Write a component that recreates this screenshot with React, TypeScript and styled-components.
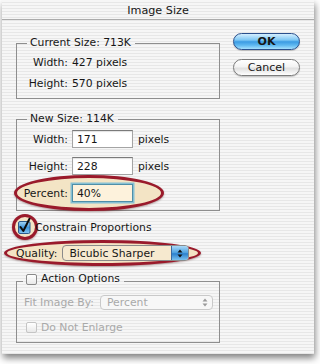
import React from "react";
import styled, { createGlobalStyle } from "styled-components";

const Global = createGlobalStyle`
  html, body { margin: 0; padding: 0; background: #ffffff; }
  body {
    width: 320px; height: 364px; overflow: hidden;
    font-family: "DejaVu Sans", "Liberation Sans", sans-serif;
    font-size: 10.8px; color: #161616;
  }
`;

const pinstripe = `repeating-linear-gradient(to bottom, #f6f6f6 0px, #f6f6f6 2px, #e7e7e7 2px, #e7e7e7 3px)`;

const Window = styled.div`
  margin-left: 2px;
  width: 312px;
  background: ${pinstripe};
  box-shadow: 1px 4px 7px rgba(0, 0, 0, 0.5);
  display: flex;
  flex-direction: column;
`;

const TitleBar = styled.div`
  height: 19px;
  line-height: 22px;
  text-align: center;
  font-size: 11.2px;
  border-bottom: 1px solid #ababab;
`;

const Body = styled.div`
  display: grid;
  grid-template-columns: 204px 67px;
  column-gap: 13px;
  padding: 13px 0 11px 14px;
  align-items: start;
`;

const LeftCol = styled.div`
  display: flex;
  flex-direction: column;
  padding-top: 3px;
`;

const RightCol = styled.div`
  display: flex;
  flex-direction: column;
  gap: 9px;
`;

const Group = styled.fieldset<{ $mt?: number; $pt: number; $pb: number; $gap: number }>`
  margin: ${p => p.$mt ?? 0}px 0 0 0;
  padding: ${p => p.$pt}px 6px ${p => p.$pb}px 0;
  border: 1px solid #8e8e8e;
  min-width: 0;
  display: flex;
  flex-direction: column;
  gap: ${p => p.$gap}px;
`;

const Legend = styled.legend<{ $ml: number; $pb?: number }>`
  margin-left: ${p => p.$ml}px;
  padding: 0 4px ${p => p.$pb ?? 0}px 3px;
  line-height: 14px;
  display: flex;
  align-items: center;
  gap: 4px;
`;

const Row = styled.div<{ $h: number; $mt?: number; $pl?: number }>`
  position: relative;
  isolation: isolate;
  display: flex;
  align-items: center;
  height: ${p => p.$h}px;
  margin-top: ${p => p.$mt ?? 0}px;
  padding-left: ${p => p.$pl ?? 0}px;
  white-space: nowrap;
`;

const Label = styled.span<{ $w?: number; $dim?: boolean }>`
  flex: none;
  width: ${p => (p.$w ? `${p.$w}px` : "auto")};
  text-align: right;
  color: ${p => (p.$dim ? "#a9a9a9" : "inherit")};
`;

const Value = styled.span`
  margin-left: 4px;
`;

const Unit = styled.span`
  margin-left: 5px;
`;

const Input = styled.div<{ $focus?: boolean }>`
  margin-left: 4px;
  width: 61px;
  height: 18px;
  box-sizing: border-box;
  padding-left: 4px;
  line-height: 17px;
  background: ${p => (p.$focus ? "#fdf2dc" : "#ffffff")};
  border: 1px solid ${p => (p.$focus ? "#4f8fa8" : "#a4a4a4")};
  border-top-color: ${p => (p.$focus ? "#4f8fa8" : "#7a7a7a")};
  box-shadow: ${p => (p.$focus ? "0 0 0 1.5px #86c0d4" : "inset 0 1px 1px rgba(0,0,0,0.12)")};
`;

const Ring = styled.span<{ $l: number; $t: number; $w: number; $h: number }>`
  position: absolute;
  z-index: -1;
  left: ${p => p.$l}px;
  top: ${p => p.$t}px;
  width: ${p => p.$w}px;
  height: ${p => p.$h}px;
  box-sizing: border-box;
  border: 3px solid #9a1a2b;
  border-radius: 50%;
  background: #f3e4c5;
  box-shadow: 0 1px 2px rgba(60, 0, 0, 0.35);
`;

const Button = styled.div<{ $primary?: boolean }>`
  height: 17px;
  box-sizing: border-box;
  border-radius: 9px;
  text-align: center;
  line-height: 15px;
  font-size: 11px;
  font-weight: ${p => (p.$primary ? 600 : 400)};
  border: 1px solid ${p => (p.$primary ? "#2a4f8c" : "#7b7b7b")};
  background: ${p =>
    p.$primary
      ? "linear-gradient(to bottom, #d4efff 0%, #7fc8f4 40%, #3b9be3 52%, #5fb8f0 75%, #a6e0fd 100%)"
      : "linear-gradient(to bottom, #ffffff 0%, #f3f3f3 45%, #e0e0e0 55%, #f4f4f4 85%, #ffffff 100%)"};
  box-shadow: 0 1px 1px rgba(0, 0, 0, 0.2);
`;

const Box = styled.span<{ $dim?: boolean }>`
  flex: none;
  width: 11px;
  height: 11px;
  box-sizing: border-box;
  border: 1px solid ${p => (p.$dim ? "#c4c4c4" : "#8a8a8a")};
  border-radius: 2px;
  background: linear-gradient(to bottom, #ffffff, #e9e9e9);
`;

const CheckText = styled.span<{ $dim?: boolean }>`
  margin-left: 4px;
  color: ${p => (p.$dim ? "#a9a9a9" : "inherit")};
`;

const CheckedIcon = styled.svg`
  flex: none;
  margin-left: 1px;
  margin-top: -3px;
`;

const Popup = styled.div<{ $w: number; $dim?: boolean }>`
  flex: none;
  display: flex;
  align-items: center;
  width: ${p => p.$w}px;
  height: ${p => (p.$dim ? 15 : 16)}px;
  box-sizing: border-box;
  margin-left: ${p => (p.$dim ? 6 : 5)}px;
  padding-left: 6px;
  border: 1px solid ${p => (p.$dim ? "#c9c9c9" : "#8a8a8a")};
  border-radius: 4px;
  background: ${p => (p.$dim ? "#f7f7f7" : "#f6e9cf")};
  color: ${p => (p.$dim ? "#a9a9a9" : "inherit")};
  overflow: hidden;
`;

const PopupText = styled.span`
  flex: 1;
`;

const ArrowCap = styled.span<{ $dim?: boolean }>`
  flex: none;
  align-self: stretch;
  width: ${p => (p.$dim ? 14 : 16)}px;
  display: flex;
  align-items: center;
  justify-content: center;
  background: ${p =>
    p.$dim ? "transparent" : "linear-gradient(to bottom, #a9d9f7 0%, #4a9fe0 50%, #2a7fcc 55%, #79c2f0 100%)"};
  border-left: ${p => (p.$dim ? "none" : "1px solid #3a6aa0")};
`;

const Arrows = ({ color }: { color: string }) => (
  <svg width="6" height="9" viewBox="0 0 6 9">
    <path d="M3 0.5 L5.5 3.5 L0.5 3.5 Z" fill={color} />
    <path d="M3 8.5 L5.5 5.5 L0.5 5.5 Z" fill={color} />
  </svg>
);

const Checked = () => (
  <CheckedIcon width="13" height="16" viewBox="0 0 13 16">
    <defs>
      <linearGradient id="cb" x1="0" y1="0" x2="0" y2="1">
        <stop offset="0" stopColor="#a7d7f6" />
        <stop offset="0.5" stopColor="#3f96dc" />
        <stop offset="1" stopColor="#86c8f2" />
      </linearGradient>
    </defs>
    <rect x="0.5" y="3.5" width="11.5" height="12" rx="1.5" fill="url(#cb)" stroke="#2d5a8a" />
    <path d="M2.5 9 L5.3 13 L11.5 0.8" fill="none" stroke="#0c0c0c" strokeWidth="2" strokeLinecap="round" strokeLinejoin="round" />
  </CheckedIcon>
);

export default function App() {
  return (
    <>
      <Global />
      <Window>
        <TitleBar>Image Size</TitleBar>
        <Body>
          <LeftCol>
            <Group $pt={4} $pb={7} $gap={5}>
              <Legend $ml={10}>Current Size: 713K</Legend>
              <Row $h={16}>
                <Label $w={51}>Width:</Label>
                <Value>427 pixels</Value>
              </Row>
              <Row $h={16}>
                <Label $w={51}>Height:</Label>
                <Value>570 pixels</Value>
              </Row>
            </Group>

            <Group $mt={13} $pt={4} $pb={8} $gap={9}>
              <Legend $ml={10}>New Size: 114K</Legend>
              <Row $h={18}>
                <Label $w={51}>Width:</Label>
                <Input>171</Input>
                <Unit>pixels</Unit>
              </Row>
              <Row $h={18}>
                <Label $w={51}>Height:</Label>
                <Input>228</Input>
                <Unit>pixels</Unit>
              </Row>
              <Row $h={18}>
                <Ring $l={-3} $t={-9} $w={150} $h={36} />
                <Label $w={51}>Percent:</Label>
                <Input $focus>40%</Input>
              </Row>
            </Group>

            <Row $h={14} $mt={9} $pl={1}>
              <Ring $l={-4} $t={-6} $w={26} $h={26} />
              <Checked />
              <CheckText>Constrain Proportions</CheckText>
            </Row>

            <Row $h={16} $mt={11}>
              <Ring $l={-12} $t={-5} $w={197} $h={26} />
              <Label>Quality:</Label>
              <Popup $w={127}>
                <PopupText>Bicubic Sharper</PopupText>
                <ArrowCap>
                  <Arrows color="#111" />
                </ArrowCap>
              </Popup>
            </Row>

            <Group $mt={11} $pt={3} $pb={8} $gap={10}>
              <Legend $ml={6} $pb={5}>
                <Box />
                <span>Action Options</span>
              </Legend>
              <Row $h={16} $pl={7}>
                <Label $dim>Fit Image By:</Label>
                <Popup $w={113} $dim>
                  <PopupText>Percent</PopupText>
                  <ArrowCap $dim>
                    <Arrows color="#9a9a9a" />
                  </ArrowCap>
                </Popup>
              </Row>
              <Row $h={14} $pl={9}>
                <Box $dim />
                <CheckText $dim>Do Not Enlarge</CheckText>
              </Row>
            </Group>
          </LeftCol>

          <RightCol>
            <Button $primary>OK</Button>
            <Button>Cancel</Button>
          </RightCol>
        </Body>
      </Window>
    </>
  );
}
